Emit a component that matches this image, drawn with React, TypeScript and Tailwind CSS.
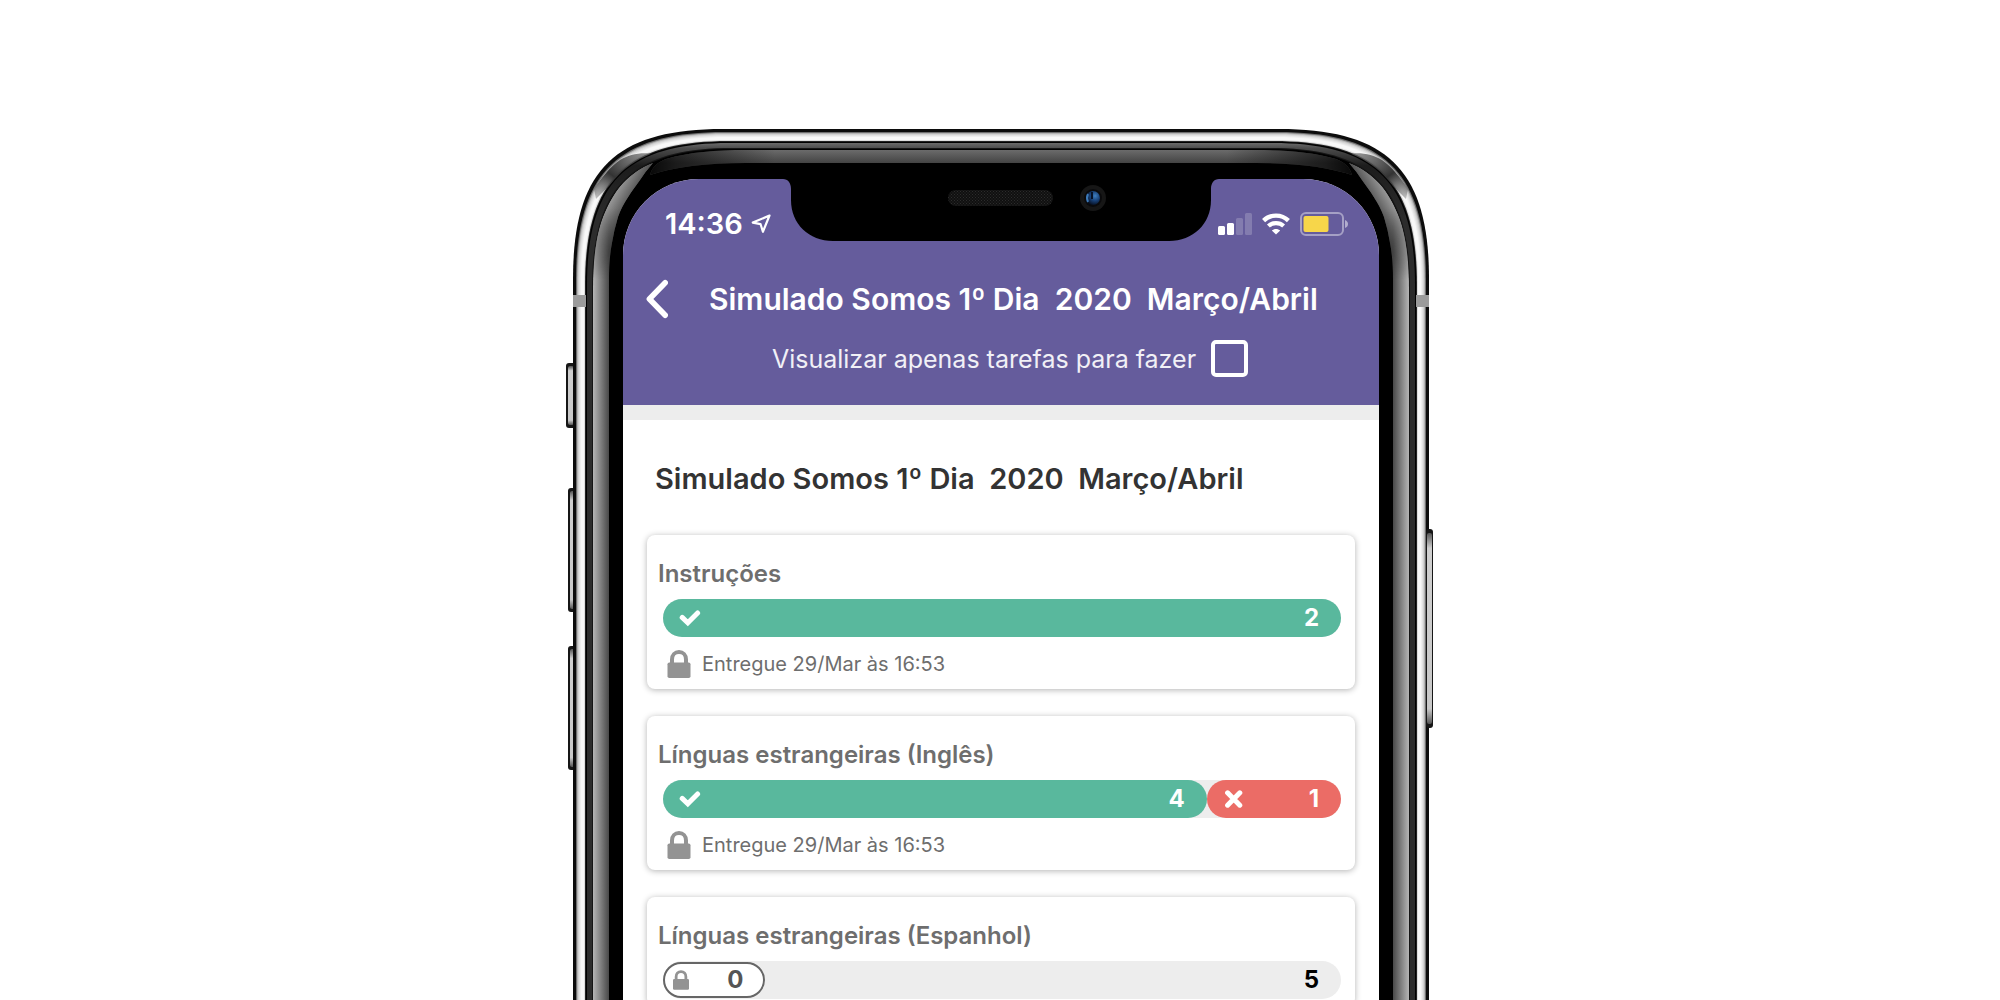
import React from "react";

type Segment = {
  kind: "done" | "wrong" | "locked";
  value: number;
  share: number;
};

type Task = {
  title: string;
  segments: Segment[];
  remaining?: number;
  delivered?: string;
};

const tasks: Task[] = [
  {
    title: "Instruções",
    segments: [{ kind: "done", value: 2, share: 100 }],
    delivered: "Entregue 29/Mar às 16:53",
  },
  {
    title: "Línguas estrangeiras (Inglês)",
    segments: [
      { kind: "done", value: 4, share: 80.2 },
      { kind: "wrong", value: 1, share: 19.8 },
    ],
    delivered: "Entregue 29/Mar às 16:53",
  },
  {
    title: "Línguas estrangeiras (Espanhol)",
    segments: [{ kind: "locked", value: 0, share: 15.1 }],
    remaining: 5,
  },
];

const segmentStyle = {
  done: "h-full bg-[#59b89d] pl-4 pr-[22px] text-white",
  wrong: "h-full bg-[#eb6c66] pl-4 pr-[22px] text-white",
  locked: "h-9 border-2 border-[#666666] bg-white pl-2 pr-5 text-[#555555]",
};

const BODY_LEFT = 7;
const BODY_RIGHT = 863;
const BODY_BOTTOM = 1760;
const BODY_RADIUS = 117;

/** Outline of the handset, moved inwards by `inset`, with smooth corners. */
function shell(inset: number) {
  const l = BODY_LEFT + inset;
  const r = BODY_RIGHT - inset;
  const t = inset;
  const b = BODY_BOTTOM - inset;
  const e = (BODY_RADIUS - inset * 0.4) * 1.28;
  const c = e * 0.277;
  return (
    `M${l} ${t + e}C${l} ${t + c} ${l + c} ${t} ${l + e} ${t}` +
    `H${r - e}C${r - c} ${t} ${r} ${t + c} ${r} ${t + e}` +
    `V${b - e}C${r} ${b - c} ${r - c} ${b} ${r - e} ${b}` +
    `H${l + e}C${l + c} ${b} ${l} ${b - c} ${l} ${b - e}Z`
  );
}

const steel: [number, string][] = [
  [0, "#0c0c0c"],
  [3, "#6f6f6f"],
  [4, "#b4b4b4"],
  [5, "#d2d2d2"],
  [6, "#e2e2e2"],
  [7, "#eeeeee"],
  [8, "#f8f8f8"],
  [11, "#dddddd"],
  [12, "#222222"],
  [13, "#000000"],
];

function SideButton({ x, y, w, h }: { x: number; y: number; w: number; h: number }) {
  return (
    <g>
      <rect x={x} y={y} width={w} height={h} rx="3" fill="#161616" />
      <rect x={x + 2} y={y + 3} width={w - 4} height={h - 6} rx="2" fill="url(#buttonFill)" />
    </g>
  );
}

function Handset() {
  const sliver =
    "M87 34C75 38 65 46 57 54C48 64 42 76 37 88C31 103 27 122 27 150V1700H43V151C43 136 44 124 46 114Q48 101 52 88C57 74 66 62 74 51Q79 43 87 34Z";
  const glint = "M28 60C36 48 44 38 54 31C64 25 78 22 92 26C76 30 62 38 50 50Q38 62 30 70Z";
  const band =
    "M84 46C86 38 92 33 100 30C124 23 150 21 180 21H690C720 21 746 23 770 30C778 33 784 38 786 46Q750 34 690 34H180Q120 34 84 46Z";
  return (
    <svg
      className="pointer-events-none absolute left-0 top-0"
      width="868"
      height="1760"
      viewBox="0 0 868 1760"
      aria-hidden="true"
    >
      <defs>
        <linearGradient id="buttonFill" x1="0" y1="0" x2="0" y2="1">
          <stop offset="0" stopColor="#555" />
          <stop offset="0.08" stopColor="#cfcfcf" />
          <stop offset="0.92" stopColor="#c8c8c8" />
          <stop offset="1" stopColor="#555" />
        </linearGradient>
        <linearGradient id="rim" gradientUnits="userSpaceOnUse" x1="0" y1="14" x2="0" y2="90">
          <stop offset="0" stopColor="#6a6a6a" />
          <stop offset="0.07" stopColor="#4c4c4c" />
          <stop offset="0.3" stopColor="#1c1c1c" />
          <stop offset="1" stopColor="#2c2c2c" />
        </linearGradient>
        <linearGradient id="topBand" gradientUnits="userSpaceOnUse" x1="0" y1="21" x2="0" y2="34">
          <stop offset="0" stopColor="#6b6b6b" />
          <stop offset="1" stopColor="#444444" />
        </linearGradient>
        <linearGradient id="bandFade" gradientUnits="userSpaceOnUse" x1="82" y1="0" x2="788" y2="0">
          <stop offset="0" stopColor="#000" stopOpacity="0.9" />
          <stop offset="0.04" stopColor="#000" stopOpacity="0.6" />
          <stop offset="0.18" stopColor="#000" stopOpacity="0" />
          <stop offset="0.82" stopColor="#000" stopOpacity="0" />
          <stop offset="0.96" stopColor="#000" stopOpacity="0.6" />
          <stop offset="1" stopColor="#000" stopOpacity="0.9" />
        </linearGradient>
        <linearGradient id="side" gradientUnits="userSpaceOnUse" x1="27" y1="0" x2="43" y2="0">
          <stop offset="0" stopColor="#b5b5b5" />
          <stop offset="0.35" stopColor="#8f8f8f" />
          <stop offset="1" stopColor="#484848" />
        </linearGradient>
        <linearGradient id="sideTop" gradientUnits="userSpaceOnUse" x1="42" y1="70" x2="66" y2="84">
          <stop offset="0" stopColor="#a4a4a4" />
          <stop offset="1" stopColor="#333333" />
        </linearGradient>
        <linearGradient id="sideTopFade" gradientUnits="userSpaceOnUse" x1="0" y1="80" x2="0" y2="150">
          <stop offset="0" stopColor="#fff" />
          <stop offset="1" stopColor="#000" />
        </linearGradient>
        <mask id="sideTopMask" maskUnits="userSpaceOnUse" x="0" y="0" width="120" height="200">
          <rect width="120" height="200" fill="url(#sideTopFade)" />
        </mask>
        <linearGradient id="glint" x1="0" y1="1" x2="1" y2="0">
          <stop offset="0" stopColor="#777" stopOpacity="0.4" />
          <stop offset="0.4" stopColor="#333" />
          <stop offset="1" stopColor="#666" stopOpacity="0.6" />
        </linearGradient>
        <clipPath id="steelClip">
          <path d={shell(3)} />
        </clipPath>
        <clipPath id="glassClip">
          <path d={shell(20)} />
        </clipPath>
      </defs>

      <SideButton x={0} y={234} w={10} h={65} />
      <SideButton x={2} y={359} w={9} h={124} />
      <SideButton x={2} y={517} w={9} h={124} />

      {steel.map(([inset, color]) => (
        <path key={inset} d={shell(inset)} fill={color} />
      ))}
      <g clipPath="url(#steelClip)">
        <path d={glint} fill="url(#glint)" />
        <path d={glint} fill="url(#glint)" transform="translate(870 0) scale(-1 1)" />
      </g>
      <path d={shell(13)} fill="#000" />
      <path d={shell(14)} fill="url(#rim)" />
      <path d={shell(19)} fill="#151515" />
      <path d={shell(20)} fill="#000" />

      <g clipPath="url(#glassClip)">
        <path d={band} fill="url(#topBand)" />
        <path d={band} fill="url(#bandFade)" />
        <path d={sliver} fill="url(#side)" />
        <path d={sliver} fill="url(#sideTop)" mask="url(#sideTopMask)" />
        <g transform="translate(870 0) scale(-1 1)">
          <path d={sliver} fill="url(#side)" />
          <path d={sliver} fill="url(#sideTop)" mask="url(#sideTopMask)" />
        </g>
      </g>

      <rect x="7" y="166" width="13" height="12" fill="#9b9b9b" />
      <rect x="850" y="166" width="13" height="12" fill="#9b9b9b" />
      <rect x="860" y="400" width="7" height="199" rx="3" fill="#161616" />
      <rect x="861" y="404" width="5" height="191" rx="2" fill="url(#buttonFill)" />
    </svg>
  );
}

function Notch() {
  return (
    <svg
      className="absolute left-1/2 top-0 -translate-x-1/2"
      width="436"
      height="62"
      viewBox="0 0 436 62"
      aria-hidden="true"
    >
      <defs>
        <pattern id="mesh" width="3" height="3" patternUnits="userSpaceOnUse">
          <rect width="3" height="3" fill="#101010" />
          <rect width="1" height="1" fill="#2c2c2c" />
          <rect x="1.5" y="1.5" width="1" height="1" fill="#2c2c2c" />
        </pattern>
        <radialGradient id="lens" cx="0.65" cy="0.35" r="0.7">
          <stop offset="0" stopColor="#3f7fc0" />
          <stop offset="0.5" stopColor="#173f75" />
          <stop offset="1" stopColor="#060d1c" />
        </radialGradient>
      </defs>
      <path
        d="M0 0C5 0 8 4 8 10V21C8 45 26 62 50 62H386C410 62 428 45 428 21V10C428 4 431 0 436 0Z"
        fill="#000"
      />
      <rect x="165" y="11" width="105" height="16" rx="8" fill="url(#mesh)" />
      <circle cx="310" cy="19" r="13" fill="#161616" />
      <circle cx="310" cy="19" r="9" fill="#0a0a0c" />
      <circle cx="310" cy="19" r="7" fill="url(#lens)" />
      <path d="M305 15Q303 19 305 23" stroke="#3d7ab8" strokeWidth="2" fill="none" />
      <path d="M309 13V20" stroke="#071226" strokeWidth="2" />
    </svg>
  );
}

function LocationArrow() {
  return (
    <svg width="20" height="20" viewBox="0 0 20 20" fill="none" aria-hidden="true">
      <path
        d="M18.5 1.5L1.8 8.6L9.6 10.2L11.9 17.8Z"
        stroke="#fff"
        strokeWidth="2.2"
        strokeLinejoin="round"
      />
    </svg>
  );
}

function Signal() {
  return (
    <svg width="34" height="22" viewBox="0 0 34 22" fill="#fff" aria-label="Sinal">
      <rect x="0" y="13" width="7" height="9" rx="1.5" />
      <rect x="9" y="10" width="7" height="12" rx="1.5" />
      <rect x="18" y="5" width="7" height="17" rx="1.5" opacity="0.2" />
      <rect x="27" y="0" width="7" height="22" rx="1.5" opacity="0.2" />
    </svg>
  );
}

function Wifi() {
  return (
    <svg width="28" height="22" viewBox="0 0 28 22" fill="none" aria-label="Wi-Fi">
      <path d="M1.6 7.6C8.4 1 19.6 1 26.4 7.6" stroke="#fff" strokeWidth="4.4" />
      <path d="M6.4 13C10.5 9.2 17.5 9.2 21.6 13" stroke="#fff" strokeWidth="4.2" />
      <path d="M14 21.6L9.8 17.6C12 15.3 16 15.3 18.2 17.6Z" fill="#fff" />
    </svg>
  );
}

function Battery() {
  return (
    <svg width="48" height="24" viewBox="0 0 48 24" fill="none" aria-label="Bateria">
      <rect x="1" y="1" width="42" height="22" rx="5" stroke="#fff" strokeOpacity="0.42" strokeWidth="2" />
      <rect x="3.5" y="4" width="25" height="16" rx="2" fill="#f7d64a" />
      <path d="M45 8C47 9 48 10 48 12S47 15 45 16Z" fill="#fff" fillOpacity="0.5" />
    </svg>
  );
}

function Lock({ className }: { className: string }) {
  return (
    <svg className={className} viewBox="0 0 23 28" aria-hidden="true">
      <path d="M4.5 14V9.4C4.5 5 7.4 2 11.5 2S18.5 5 18.5 9.4V14" fill="none" stroke="#939393" strokeWidth="4" />
      <rect x="0" y="12.5" width="23" height="15.5" rx="1.8" fill="#939393" />
    </svg>
  );
}

function Check() {
  return (
    <svg width="22" height="18" viewBox="0 0 22 18" aria-label="Corretas">
      <path
        d="M3.2 8.4L8.8 13.8L18.6 4"
        fill="none"
        stroke="#fff"
        strokeWidth="5"
        strokeLinecap="round"
      />
    </svg>
  );
}

function Cross() {
  return (
    <svg width="22" height="18" viewBox="0 0 22 18" aria-label="Erradas">
      <path d="M4.6 2.8L16.8 15.2M16.8 2.8L4.6 15.2" stroke="#fff" strokeWidth="5" strokeLinecap="round" />
    </svg>
  );
}

function ProgressBar({ segments, remaining }: { segments: Segment[]; remaining?: number }) {
  return (
    <div className="ml-4 mr-3.5 flex h-[38px] items-center rounded-full bg-[#ededed] text-2xl font-bold">
      {segments.map((s) => (
        <div
          key={s.kind}
          className={`flex items-center justify-between rounded-full ${segmentStyle[s.kind]}`}
          style={{ width: `${s.share}%` }}
        >
          {s.kind === "done" && <Check />}
          {s.kind === "wrong" && <Cross />}
          {s.kind === "locked" && <Lock className="h-5 w-4" />}
          <span>{s.value}</span>
        </div>
      ))}
      {remaining !== undefined && <span className="ml-auto pr-[22px] text-black">{remaining}</span>}
    </div>
  );
}

function TaskCard({ task }: { task: Task }) {
  return (
    <li className="rounded-lg bg-white pb-[7px] pt-[23px] shadow-[0_1px_6px_rgba(0,0,0,0.3)]">
      <h3 className="mb-[9px] px-[11px] text-2xl font-semibold text-[#6e6e6e]">{task.title}</h3>
      <ProgressBar segments={task.segments} remaining={task.remaining} />
      {task.delivered && (
        <p className="mt-[9px] flex h-9 items-center gap-[11px] pl-5 text-xl text-[#6e6e6e]">
          <Lock className="h-7 w-6" />
          {task.delivered}
        </p>
      )}
    </li>
  );
}

export default function App() {
  return (
    <main className="flex h-screen justify-center overflow-hidden bg-white pt-[129px] font-['Inter',sans-serif]">
      <div className="relative w-[868px] shrink-0">
        <Handset />
        <div className="relative ml-[57px] mr-[55px] mt-[50px] overflow-hidden rounded-t-[76px] bg-white">
          <header className="relative bg-[#655c9c] text-white">
            <Notch />
            <div className="flex h-[90px] items-center justify-between pl-[42px] pr-[31px]">
              <div className="flex items-center gap-2 text-[29px] font-semibold">
                <time>14:36</time>
                <LocationArrow />
              </div>
              <div className="flex items-center gap-2.5">
                <Signal />
                <Wifi />
                <Battery />
              </div>
            </div>
            <div className="flex h-[60px] items-center pl-[23px]">
              <button type="button" aria-label="Voltar" className="shrink-0">
                <svg width="22" height="40" viewBox="0 0 22 40" fill="none">
                  <path
                    d="M19.2 3.8L3.4 20L19.2 36.2"
                    stroke="#fff"
                    strokeWidth="5.6"
                    strokeLinecap="round"
                    strokeLinejoin="round"
                  />
                </svg>
              </button>
              <h1 className="whitespace-pre pl-[41px] text-[30px] font-semibold">
                {"Simulado Somos 1º Dia  2020  Março/Abril"}
              </h1>
            </div>
            <label className="flex h-[76px] items-start justify-center gap-[15px] pl-[18px] pt-[11px] text-[25px]/[38px] text-[#f1f0f6]">
              Visualizar apenas tarefas para fazer
              <input
                type="checkbox"
                className="size-[37px] appearance-none rounded-[5px] border-4 border-white checked:bg-white"
              />
            </label>
          </header>
          <div className="h-[15px] bg-[#ededed]" />
          <section className="px-6 pt-[41px]">
            <h2 className="whitespace-pre px-2 text-[29px]/[36px] font-semibold text-[#333333]">
              {"Simulado Somos 1º Dia  2020  Março/Abril"}
            </h2>
            <ul className="flex flex-col gap-[27px] pt-[38px]">
              {tasks.map((t) => (
                <TaskCard key={t.title} task={t} />
              ))}
            </ul>
          </section>
        </div>
      </div>
    </main>
  );
}
